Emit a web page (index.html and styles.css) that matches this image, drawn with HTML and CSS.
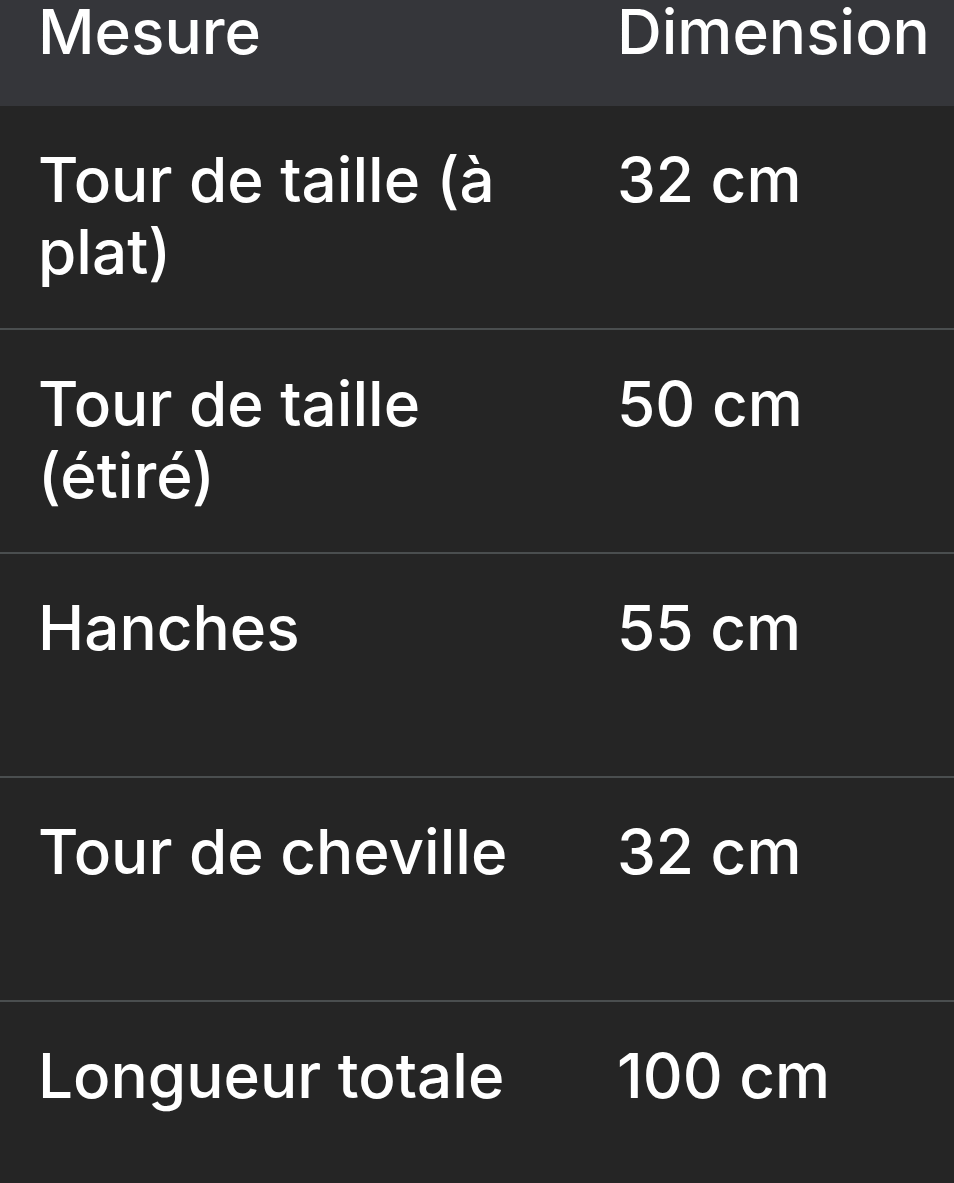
FILE: index.html
```html
<!DOCTYPE html>
<html lang="fr">
<head>
<meta charset="utf-8">
<title>Mesures</title>
<link rel="stylesheet" href="styles.css">
</head>
<body>
<div class="size-table">
  <div class="row head">
    <div class="cell">Mesure</div>
    <div class="cell">Dimension</div>
  </div>
  <div class="row">
    <div class="cell">Tour de taille (à plat)</div>
    <div class="cell">32 cm</div>
  </div>
  <div class="row">
    <div class="cell">Tour de taille (étiré)</div>
    <div class="cell">50 cm</div>
  </div>
  <div class="row">
    <div class="cell">Hanches</div>
    <div class="cell">55 cm</div>
  </div>
  <div class="row">
    <div class="cell">Tour de cheville</div>
    <div class="cell">32 cm</div>
  </div>
  <div class="row">
    <div class="cell">Longueur totale</div>
    <div class="cell">100 cm</div>
  </div>
</div>
</body>
</html>
```
FILE: styles.css
```css
html, body {
  margin: 0;
  background: #252525;
}
body {
  color: #fff;
  font-family: "Inter", "Noto Sans", sans-serif;
  font-size: 62px;
  font-weight: 500;
  line-height: 72px;
}
.size-table {
  display: flex;
  flex-direction: column;
}
.row {
  display: grid;
  grid-template-columns: 579px 1fr;
  padding-left: 38px;
  height: 222px;
  border-bottom: 2px solid #4a4e4f;
}
.row .cell {
  padding: 38px 40px 0 0;
}
.row .cell + .cell {
  padding-right: 0;
}
.row.head {
  background: #35363a;
  height: 106px;
  border-bottom: none;
  line-height: 64px;
}
.row.head .cell {
  padding-top: 0;
}
.row:last-child {
  border-bottom: none;
}
```
